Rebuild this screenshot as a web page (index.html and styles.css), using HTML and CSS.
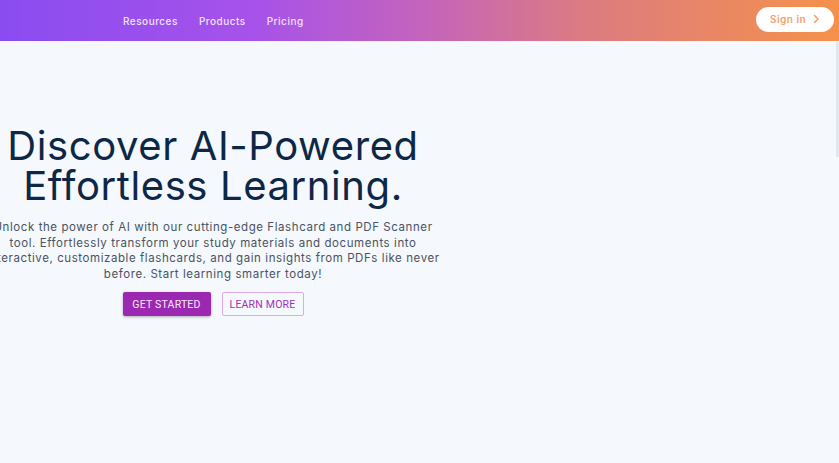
FILE: index.html
```html
<!DOCTYPE html>
<html>
<head>
<meta charset="utf-8">
<link rel="stylesheet" href="styles.css">
</head>
<body>
<header class="topbar">
  <nav class="nav">
    <a class="nav-link">Resources</a>
    <a class="nav-link">Products</a>
    <a class="nav-link">Pricing</a>
  </nav>
  <button class="signin">Sign in
    <svg class="chev" width="8" height="10" viewBox="0 0 8 10"><path d="M2.5 1.5 L6 5 L2.5 8.5" fill="none" stroke="currentColor" stroke-width="1.6" stroke-linecap="round" stroke-linejoin="round"/></svg>
  </button>
</header>
<main class="main">
  <section class="hero">
    <h1 class="title">Discover AI-Powered<br>Effortless Learning.</h1>
    <p class="lead">Unlock the power of AI with our cutting-edge Flashcard and PDF Scanner tool. Effortlessly transform your study materials and documents into interactive, customizable flashcards, and gain insights from PDFs like never before. Start learning smarter today!</p>
    <div class="actions">
      <button class="btn btn-primary">GET STARTED</button>
      <button class="btn btn-outline">LEARN MORE</button>
    </div>
  </section>
  <div class="scroll-track"></div>
</main>
</body>
</html>
```
FILE: styles.css
```css
* { box-sizing: border-box; }
html, body { margin: 0; padding: 0; }
body {
  width: 839px;
  height: 463px;
  overflow: hidden;
  background: #f5f8fc;
  font-family: Inter, "Liberation Sans", sans-serif;
}
.topbar {
  height: 41px;
  background: linear-gradient(90deg, #8a4cf0 0%, #a652ea 30%, #c463bd 50%, #dc7c80 70%, #f5914a 100%);
  display: flex;
  align-items: center;
  justify-content: space-between;
  padding: 0 5px 0 123px;
}
.nav { display: flex; gap: 21px; }
.nav-link {
  color: #f0e2ff;
  font-size: 10px;
  font-weight: 500;
  letter-spacing: 0.05em;
}
.signin {
  width: 78px;
  height: 25px;
  border: none;
  border-radius: 13px;
  background: #ffffff;
  color: #f5a06c;
  font-family: Inter, "Liberation Sans", sans-serif;
  font-size: 10px;
  font-weight: 600;
  letter-spacing: 0.05em;
  display: flex;
  align-items: center;
  justify-content: center;
  gap: 6px;
  padding: 0;
  margin-bottom: 3px;
}
.chev { display: block; }
.main {
  position: relative;
  height: 422px;
  display: flex;
}
.hero {
  width: 426px;
  display: flex;
  flex-direction: column;
  align-items: center;
  padding-top: 85px;
}
.title {
  margin: 0;
  width: 470px;
  flex-shrink: 0;
  text-align: center;
  font-size: 40px;
  line-height: 40px;
  font-weight: 400;
  color: #0d2847;
  letter-spacing: 0.015em;
}
.lead {
  margin: 14px 0 0;
  width: 454px;
  flex-shrink: 0;
  text-align: center;
  font-size: 11.5px;
  line-height: 15.6px;
  color: #4a5363;
  letter-spacing: 0.05em;
}
.actions {
  display: flex;
  gap: 11px;
  margin-top: 10px;
}
.btn {
  height: 24px;
  border-radius: 2px;
  font-family: Roboto, "Liberation Sans", sans-serif;
  font-size: 10.5px;
  font-weight: 400;
  padding: 0;
  white-space: nowrap;
  letter-spacing: 0.02em;
}
.btn-primary {
  width: 88px;
  background: #9c27b0;
  color: #f7e9fa;
  border: none;
  box-shadow: 0 1px 3px rgba(0,0,0,0.3);
}
.btn-outline {
  width: 82px;
  background: transparent;
  color: #a030b8;
  border: 1px solid #dcaaea;
}
.scroll-track {
  position: absolute;
  right: 0;
  top: 1px;
  width: 3px;
  height: 115px;
  background: #e3e8ef;
}
```
